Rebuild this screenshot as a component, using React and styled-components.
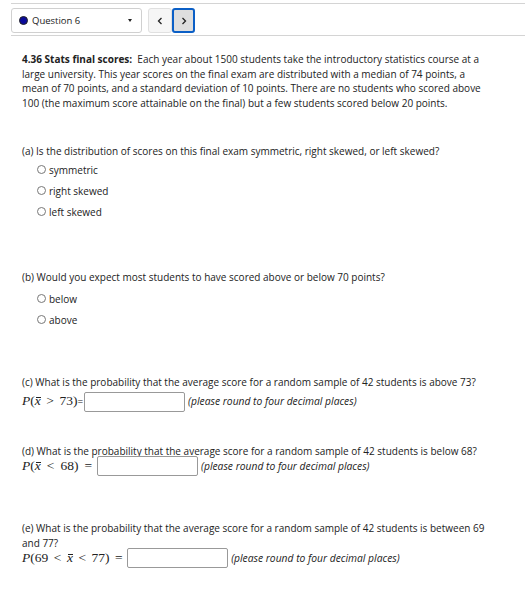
import React from "react";
import styled, { createGlobalStyle } from "styled-components";

const Global = createGlobalStyle`
  html, body { margin: 0; padding: 0; background: #fff; }
  body { font-family: "Open Sans", "Liberation Sans", sans-serif; color: #222; }
`;

const Page = styled.div`
  width: 525px;
  padding-top: 3px;
`;

const Header = styled.div`
  margin-left: 11px;
  border-top: 1px solid #d4d4d4;
  border-bottom: 1px solid #d4d4d4;
  padding: 4px 0 2px;
  display: flex;
  align-items: center;
`;

const Select = styled.div`
  height: 23px;
  border: 1px solid #d0d0d0;
  border-radius: 3px;
  display: flex;
  align-items: center;
  padding: 0 8px 0 7px;
  width: 114px;
  font-size: 9.5px;
  color: #222;
`;

const Dot = styled.span`
  width: 9px;
  height: 9px;
  border-radius: 50%;
  background: #0a0a9a;
  border: 0.5px solid #222;
  box-sizing: border-box;
  margin-right: 4px;
`;

const SelectLabel = styled.span`
  flex: 1;
`;

const Caret = styled.span`
  width: 0;
  height: 0;
  border-left: 2.5px solid transparent;
  border-right: 2.5px solid transparent;
  border-top: 3.5px solid #222;
  margin-right: 1px;
`;

const NavButton = styled.div`
  width: ${(p) => (p.$active ? "19px" : "22px")};
  height: ${(p) => (p.$active ? "21px" : "23px")};
  border: ${(p) => (p.$active ? "2px solid #0b5fc6" : "1px solid #e0e0e0")};
  background: ${(p) => (p.$active ? "#dedede" : "#f6f6f6")};
  border-radius: 3px;
  display: flex;
  align-items: center;
  justify-content: center;
  margin-left: ${(p) => p.$ml}px;
`;

const Content = styled.div`
  padding: 16px 0 0 22px;
  width: 470px;
  font-size: 10px;
  line-height: 14.5px;
`;

const Intro = styled.p`
  margin: 0;
`;

const Part = styled.div`
  margin-top: ${(p) => p.$mt}px;
`;

const Question = styled.p`
  margin: 0;
`;

const Options = styled.div`
  display: flex;
  flex-direction: column;
  gap: 6.5px;
  margin-top: ${(p) => p.$mt}px;
  padding-left: 15px;
`;

const Option = styled.label`
  display: flex;
  align-items: center;
  font-size: 10px;
  line-height: 14.5px;
`;

const Radio = styled.span`
  width: 9px;
  height: 9px;
  border-radius: 50%;
  border: 1px solid #777;
  box-sizing: border-box;
  margin-right: 3px;
  background: #fff;
`;

const AnswerRow = styled.div`
  display: flex;
  align-items: center;
  margin-top: ${(p) => p.$mt || 0}px;
`;

const Math = styled.span`
  font-family: "Liberation Serif", "DejaVu Serif", serif;
  font-size: 13.5px;
  white-space: nowrap;
  color: #222;
`;

const I = styled.i`
  font-style: italic;
`;

const Bar = styled.span`
  font-style: italic;
  position: relative;
  display: inline-block;
  &::after {
    content: "";
    position: absolute;
    left: 1px;
    right: 0;
    top: 3px;
    border-top: 1px solid #222;
  }
`;

const Eq = styled.span`
  font-family: "Open Sans", sans-serif;
  font-size: 10px;
  margin-right: 1px;
`;

const Input = styled.div`
  width: 99px;
  height: 18px;
  border: 1px solid #999;
  border-radius: 2px;
  background: #fff;
  margin-left: ${(p) => p.$ml || 0}px;
`;

const Hint = styled.span`
  font-style: italic;
  font-size: 10.3px;
  margin-left: 3px;
  color: #222;
`;

const Op = styled.span`
  margin: 0 ${(p) => p.$m ?? 5.5}px;
`;

const Chevron = ({ dir }) => (
  <svg width="6" height="8" viewBox="0 0 6 8">
    <path
      d={dir === "left" ? "M4.5 1 L1.5 4 L4.5 7" : "M1.5 1 L4.5 4 L1.5 7"}
      fill="none"
      stroke="#222"
      strokeWidth="1.3"
    />
  </svg>
);

export default function App() {
  return (
    <Page>
      <Global />
      <Header>
        <Select>
          <Dot />
          <SelectLabel>Question 6</SelectLabel>
          <Caret />
        </Select>
        <NavButton $ml={6}>
          <Chevron dir="left" />
        </NavButton>
        <NavButton $active $ml={0}>
          <Chevron dir="right" />
        </NavButton>
      </Header>
      <Content>
        <Intro>
          <b>4.36 Stats final scores:</b>{"\u00a0 "}Each year about 1500 students take the introductory
          statistics course at a large university. This year scores on the final exam are
          distributed with a median of 74 points, a mean of 70 points, and a standard deviation of
          10 points. There are no students who scored above 100 (the maximum score attainable on
          the final) but a few students scored below 20 points.
        </Intro>

        <Part $mt={34}>
          <Question>
            (a) Is the distribution of scores on this final exam symmetric, right skewed, or left
            skewed?
          </Question>
          <Options $mt={4}>
            <Option><Radio />symmetric</Option>
            <Option><Radio />right skewed</Option>
            <Option><Radio />left skewed</Option>
          </Options>
        </Part>

        <Part $mt={51}>
          <Question>(b) Would you expect most students to have scored above or below 70 points?</Question>
          <Options $mt={7}>
            <Option><Radio />below</Option>
            <Option><Radio />above</Option>
          </Options>
        </Part>

        <Part $mt={48}>
          <Question>
            (c) What is the probability that the average score for a random sample of 42 students
            is above 73?
          </Question>
          <AnswerRow $mt={2}>
            <Math>
              <I>P</I>(<Bar>x</Bar><Op>&gt;</Op>73)
            </Math>
            <Eq>=</Eq>
            <Input />
            <Hint>(please round to four decimal places)</Hint>
          </AnswerRow>
        </Part>

        <Part $mt={32}>
          <Question>
            (d) What is the probability that the average score for a random sample of 42 students
            is below 68?
          </Question>
          <AnswerRow $mt={-2}>
            <Math>
              <I>P</I>(<Bar>x</Bar><Op $m={6}>&lt;</Op>68)<Op $m={6}>=</Op>
            </Math>
            <Input $ml={-1} />
            <Hint>(please round to four decimal places)</Hint>
          </AnswerRow>
        </Part>

        <Part $mt={45}>
          <Question>
            (e) What is the probability that the average score for a random sample of 42 students
            is between 69 and 77?
          </Question>
          <AnswerRow $mt={-2}>
            <Math>
              <I>P</I>(69<Op>&lt;</Op><Bar>x</Bar><Op>&lt;</Op>77)<Op>=</Op>
            </Math>
            <Input $ml={-1} />
            <Hint>(please round to four decimal places)</Hint>
          </AnswerRow>
        </Part>
      </Content>
    </Page>
  );
}
